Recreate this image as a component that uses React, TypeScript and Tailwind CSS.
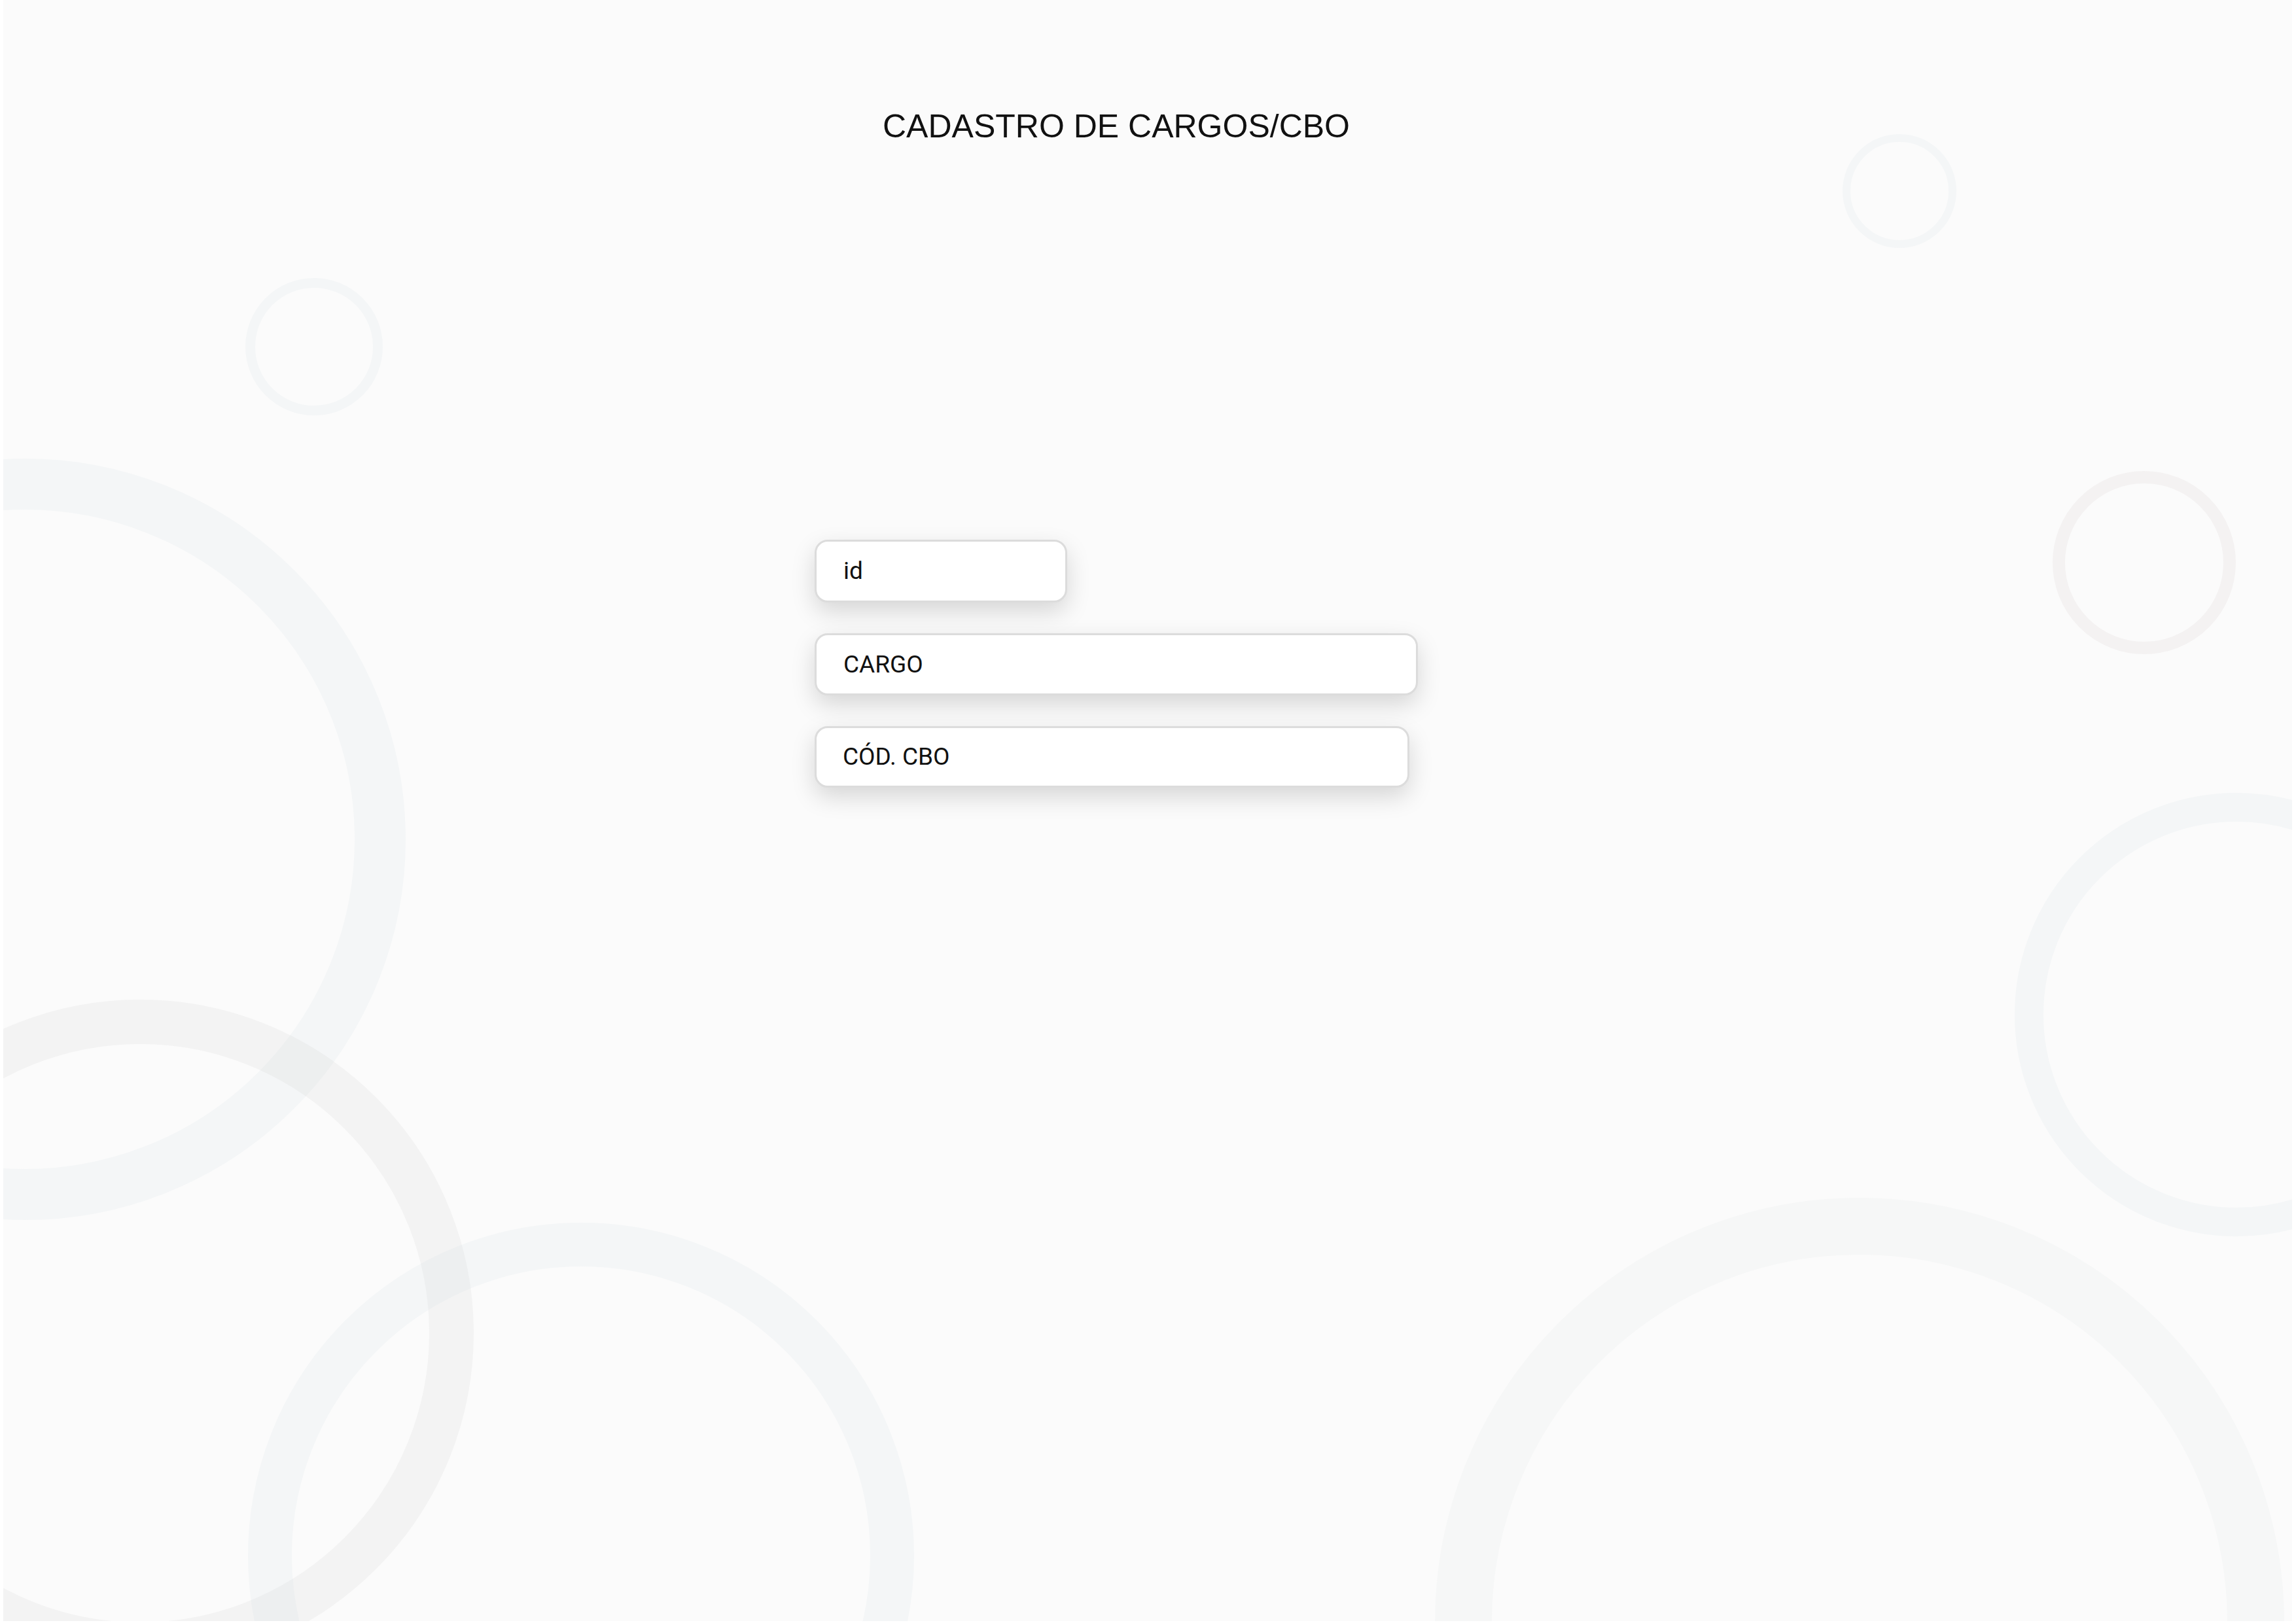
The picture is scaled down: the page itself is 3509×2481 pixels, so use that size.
export default function App() {
  return (
    <div className="min-h-screen w-full bg-white pb-[3px] pl-[5px] pr-[6px]">
      <div className="relative h-[2478px] overflow-hidden bg-[#fbfbfb]">
        {/* decorative rings */}
        <div className="absolute left-[2811px] top-[205px] h-[174px] w-[174px] rounded-full border-[12px] border-[#b8d1da1a]"></div>
        <div className="absolute left-[370px] top-[425px] h-[210px] w-[210px] rounded-full border-[15px] border-[#b8d1da1a]"></div>
        <div className="absolute left-[3132px] top-[720px] h-[280px] w-[280px] rounded-full border-[19px] border-[#c9b8b81f]"></div>
        <div className="absolute -left-[549px] top-[701px] h-[1164px] w-[1164px] rounded-full border-[78px] border-[#b8d1da1a]"></div>
        <div className="absolute -left-[301px] top-[1528px] h-[1020px] w-[1020px] rounded-full border-[68px] border-[#b8b8b81c]"></div>
        <div className="absolute left-[374px] top-[1869px] h-[1018px] w-[1018px] rounded-full border-[67px] border-[#b8d1da1a]"></div>
        <div className="absolute left-[3074px] top-[1212px] h-[678px] w-[678px] rounded-full border-[44px] border-[#b8d1da1a]"></div>
        <div className="absolute left-[2188px] top-[1831px] h-[1298px] w-[1298px] rounded-full border-[87px] border-[#b8c9c912]"></div>

        <div className="relative flex flex-col pl-[1240px] pt-[168px]">
          <h1 className="w-[922px] text-center font-['Liberation_Sans',Arial,sans-serif] text-[50px] leading-none text-[#111]">
            CADASTRO DE CARGOS/CBO
          </h1>

          <div className="mt-[607px] flex flex-col gap-[47px] font-['Roboto',sans-serif] text-[37px] text-[#111]">
            <div className="flex h-[96px] w-[386px] items-center rounded-[20px] border-[3px] border-[#dcdcdc] bg-white pl-[41px] shadow-[0_14px_36px_rgba(0,0,0,0.15)]">
              id
            </div>
            <div className="flex h-[95px] w-[922px] items-center rounded-[20px] border-[3px] border-[#dcdcdc] bg-white pl-[41px] shadow-[0_14px_36px_rgba(0,0,0,0.15)]">
              CARGO
            </div>
            <div className="flex h-[94px] w-[909px] items-center rounded-[20px] border-[3px] border-[#dcdcdc] bg-white pl-[40px] shadow-[0_14px_36px_rgba(0,0,0,0.15)]">
              CÓD. CBO
            </div>
          </div>
        </div>
      </div>
    </div>
  );
}
